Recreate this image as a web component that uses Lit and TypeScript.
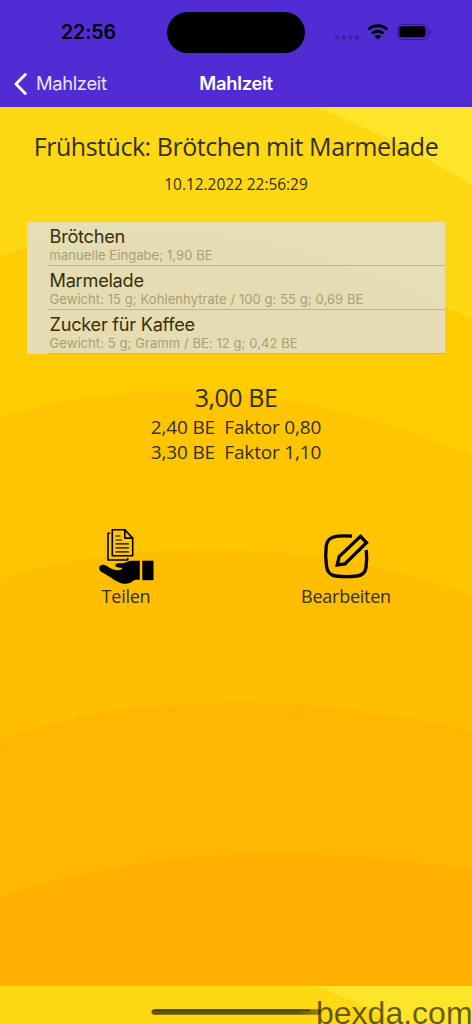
import { LitElement, html, css, svg } from "lit";
import { customElement, property } from "lit/decorators.js";

interface Entry {
  name: string;
  detail: string;
}

const ENTRIES: Entry[] = [
  { name: "Brötchen", detail: "manuelle Eingabe; 1,90 BE" },
  { name: "Marmelade", detail: "Gewicht: 15 g; Kohlenhytrate / 100 g: 55 g; 0,69 BE" },
  { name: "Zucker für Kaffee", detail: "Gewicht: 5 g; Gramm / BE: 12 g; 0,42 BE" },
];

const WAVES = [
  { fill: "#ffe52a", d: "M316 0Q400 34 472 78V0Z" },
  { fill: "#ffcc02", d: "M0 150C110 107 270 112 472 213V879H0Z" },
  { fill: "#ffc502", d: "M0 311C130 269 290 273 472 349V879H0Z" },
  { fill: "#ffbe01", d: "M0 472C140 429 310 432 472 487V879H0Z" },
  { fill: "#ffb701", d: "M0 632C140 583 310 586 472 625V879H0Z" },
  { fill: "#ffb001", d: "M0 791C150 739 310 737 472 764V879H0Z" },
];

@customElement("status-bar")
class StatusBar extends LitElement {
  static styles = css`
    :host {
      display: grid;
      grid-template-columns: 167px 138px 1fr;
      height: 60px;
      padding-top: 12px;
      box-sizing: border-box;
      color: #000;
    }
    .time {
      font: 600 19.5px/41px Inter, sans-serif;
      padding-left: 61px;
      letter-spacing: -0.05px;
    }
    .island {
      height: 41px;
      border-radius: 21px;
      background: #000;
    }
    .icons {
      display: block;
      margin: 8px 0 0 29px;
    }
  `;
  render() {
    return html`
      <div class="time">22:56</div>
      <div class="island"></div>
      <svg class="icons" width="100" height="24" viewBox="334 20 100 24">
        <g fill="#4020a6">
          <circle cx="337.3" cy="37.2" r="2.2" /><circle cx="343.8" cy="37.2" r="2.2" />
          <circle cx="350.3" cy="37.2" r="2.2" /><circle cx="357" cy="37.2" r="2.2" />
        </g>
        <g fill="none" stroke="#000" stroke-width="3">
          <path d="M368.4 29.5a13.6 13.6 0 0 1 18.8 0" />
          <path d="M372 33.5a8.4 8.4 0 0 1 11.6 0" />
        </g>
        <path d="M374.4 36.3a4.8 4.8 0 0 1 6.8 0l-3.4 3.2z" />
        <rect x="397.5" y="24.5" width="30" height="15" rx="4.8" fill="none" stroke="#391c93" stroke-width="1.2" />
        <rect x="399" y="26.2" width="26.5" height="11" rx="3.2" />
        <path d="M429 29.6q1.9.7 1.9 2.4t-1.9 2.4z" fill="#391c93" />
      </svg>
    `;
  }
}

@customElement("nav-bar")
class NavBar extends LitElement {
  static styles = css`
    :host {
      display: grid;
      grid-template-columns: 1fr auto 1fr;
      align-items: center;
      height: 47px;
      color: #fff;
      font: 18.4px/46px Inter, sans-serif;
    }
    .back {
      display: flex;
      align-items: center;
      gap: 8px;
      padding-left: 14px;
      color: #e9e4fa;
      letter-spacing: -0.35px;
    }
    .title {
      font-weight: 600;
      letter-spacing: -0.3px;
    }
    .label {
      margin-top: -1px;
    }
  `;
  render() {
    return html`
      <div class="back">
        <svg width="14" height="22" viewBox="0 0 14 22">
          <path d="M11.3 1.6 2 11l9.3 9.4" fill="none" stroke="#fff" stroke-width="2.8" stroke-linecap="round" stroke-linejoin="round" />
        </svg>
        <span class="label">Mahlzeit</span>
      </div>
      <div class="title label">Mahlzeit</div>
    `;
  }
}

@customElement("meal-entry")
class MealEntry extends LitElement {
  @property() name = "";
  @property() detail = "";
  static styles = css`
    :host {
      display: block;
      height: 44px;
      box-sizing: border-box;
      margin-left: 22px;
      padding: 3px 0 0 0.5px;
      border-bottom: 1px solid #bcb48a;
      font-family: Inter, sans-serif;
      white-space: nowrap;
    }
    .name {
      font-size: 18.2px;
      line-height: 22px;
      letter-spacing: -0.27px;
      color: #383008;
    }
    .detail {
      font-size: 13px;
      line-height: 16px;
      letter-spacing: 0.07px;
      color: #a69f78;
    }
  `;
  render() {
    return html`<div class="name">${this.name}</div><div class="detail">${this.detail}</div>`;
  }
}

@customElement("app-root")
class AppRoot extends LitElement {
  static styles = css`
    :host {
      display: flex;
      flex-direction: column;
      position: relative;
      width: 472px;
      height: 1024px;
      overflow: hidden;
      font-family: "Open Sans", sans-serif;
      color: #303028;
      background: #ffd814;
    }
    .head {
      background: #512bd4;
      height: 107px;
    }
    .page {
      position: relative;
      height: 879px;
      display: flex;
      flex-direction: column;
      align-items: center;
      white-space: pre;
    }
    .waves {
      position: absolute;
      inset: 0;
    }
    .page > :not(.waves) {
      position: relative;
    }
    .title {
      margin-top: 21px;
      font-size: 25px;
      letter-spacing: -0.46px;
      line-height: 36px;
    }
    .date {
      margin-top: 11px;
      font-size: 15.4px;
      line-height: 20px;
    }
    .list {
      align-self: stretch;
      margin: 27px 27px 0;
      background: rgba(224, 224, 224, 0.8);
    }
    .total {
      margin-top: 26px;
      font-size: 25px;
      letter-spacing: -0.45px;
      line-height: 35px;
    }
    .factor {
      font-size: 19px;
      letter-spacing: -0.18px;
      line-height: 25px;
    }
    .actions {
      align-self: stretch;
      display: grid;
      grid-template-columns: 1fr 1fr;
      margin: 62px 16px 0;
    }
    .action {
      display: flex;
      flex-direction: column;
      align-items: center;
      font-size: 18px;
      letter-spacing: -0.25px;
      line-height: 22px;
    }
    .foot {
      position: relative;
      height: 38px;
    }
    .corner {
      display: block;
    }
    .mark {
      position: absolute;
      left: 316px;
      top: 17px;
      font: 32px/21px "Liberation Sans", Arial, sans-serif;
      color: rgba(0, 0, 0, 0.62);
    }
  `;
  render() {
    return html`
      <div class="head"><status-bar></status-bar><nav-bar></nav-bar></div>
      <div class="page">
        <svg class="waves" width="472" height="879" viewBox="0 0 472 879">
          ${WAVES.map((w) => svg`<path fill=${w.fill} d=${w.d} />`)}
        </svg>
        <div class="title">Frühstück: Brötchen mit Marmelade</div>
        <div class="date">10.12.2022 22:56:29</div>
        <div class="list">${ENTRIES.map((e) => html`<meal-entry .name=${e.name} .detail=${e.detail}></meal-entry>`)}</div>
        <div class="total">3,00 BE</div>
        <div class="factor">2,40 BE  Faktor 0,80</div>
        <div class="factor">3,30 BE  Faktor 1,10</div>
        <div class="actions">
          <div class="action">
            <svg width="58" height="58" viewBox="97 527 58 58">
              <g fill="none" stroke="#000" stroke-width="1.6" stroke-linecap="round" stroke-linejoin="round">
                <path d="M112.300 529.800h12.500l7.900 8.300v17.600h-20.400z" />
                <path d="M124.800 529.800v8.300h7.900M109.600 533.300h-1.600v26.700h19.700v-1.400" />
                <path stroke-width="1.2" d="M116 536h4M116 540h5.500M116 543.900h12.500M116 547.800h12.500M116 551.900h12.500" />
              </g>
              <path d="M99.200 568.400c-.3-3 2.900-4.200 5.800-3.200 3.200 1.200 6 3.800 9.500 4.600 3 .7 6.200.3 7.300-.8.8-.9 0-1.300-1.500-1.300-2.700 0-4.900-.8-5-2.200-.1-1.900 2.300-2.300 5-2.200 2.200.1 4.300-.1 6.500-1.200 2-.9 3.500-1.300 6-1.300h7v19h-3c-3 0-4.600 2.200-7 3.200-3.500 1.400-7.500.8-11-.8-4.700-2.200-11.300-7-15.800-9.500-2.300-1.200-3.600-2.300-3.800-4.300z" />
              <path d="M142.300 560.700h11.200v19.500h-11.200z" />
            </svg>
            <span>Teilen</span>
          </div>
          <div class="action">
            <svg width="58" height="58" viewBox="317 527 58 58">
              <g fill="none" stroke="#000" stroke-width="3.300">
                <path d="M352 536.200C344 535.700 337 536 333 537.300C328.500 538.700 326.800 541.500 326.200 546C325.500 552 325.500 559 326.500 566C327.300 572.500 330 575.300 336 576C343 576.800 351 576.700 357 576C362.500 575.300 365.300 572.700 366 567.500C366.800 561.500 366.900 556 366.300 550" />
                <path d="M360.600 536.400l5.900 6.300-21.600 21.300-7.700 1 2-8.500z" />
              </g>
            </svg>
            <span>Bearbeiten</span>
          </div>
        </div>
      </div>
      <div class="foot">
        <svg class="corner" width="472" height="38" viewBox="0 0 472 38">
          <defs>
            <linearGradient id="bar" x1="0" x2="1"><stop offset=".86" stop-color="#665509" /><stop offset="1" stop-color="#9a8512" /></linearGradient>
          </defs>
          <path d="M315 0Q362 17 398 38H472V0Z" fill="#ffe52a" />
          <rect x="151.500" y="23.300" width="169" height="5.400" rx="2.700" fill="url(#bar)" />
          <path d="M154 24.200h156" stroke="#493d04" stroke-width="1.500" />
        </svg>
        <div class="mark">bexda.com</div>
      </div>
    `;
  }
}
